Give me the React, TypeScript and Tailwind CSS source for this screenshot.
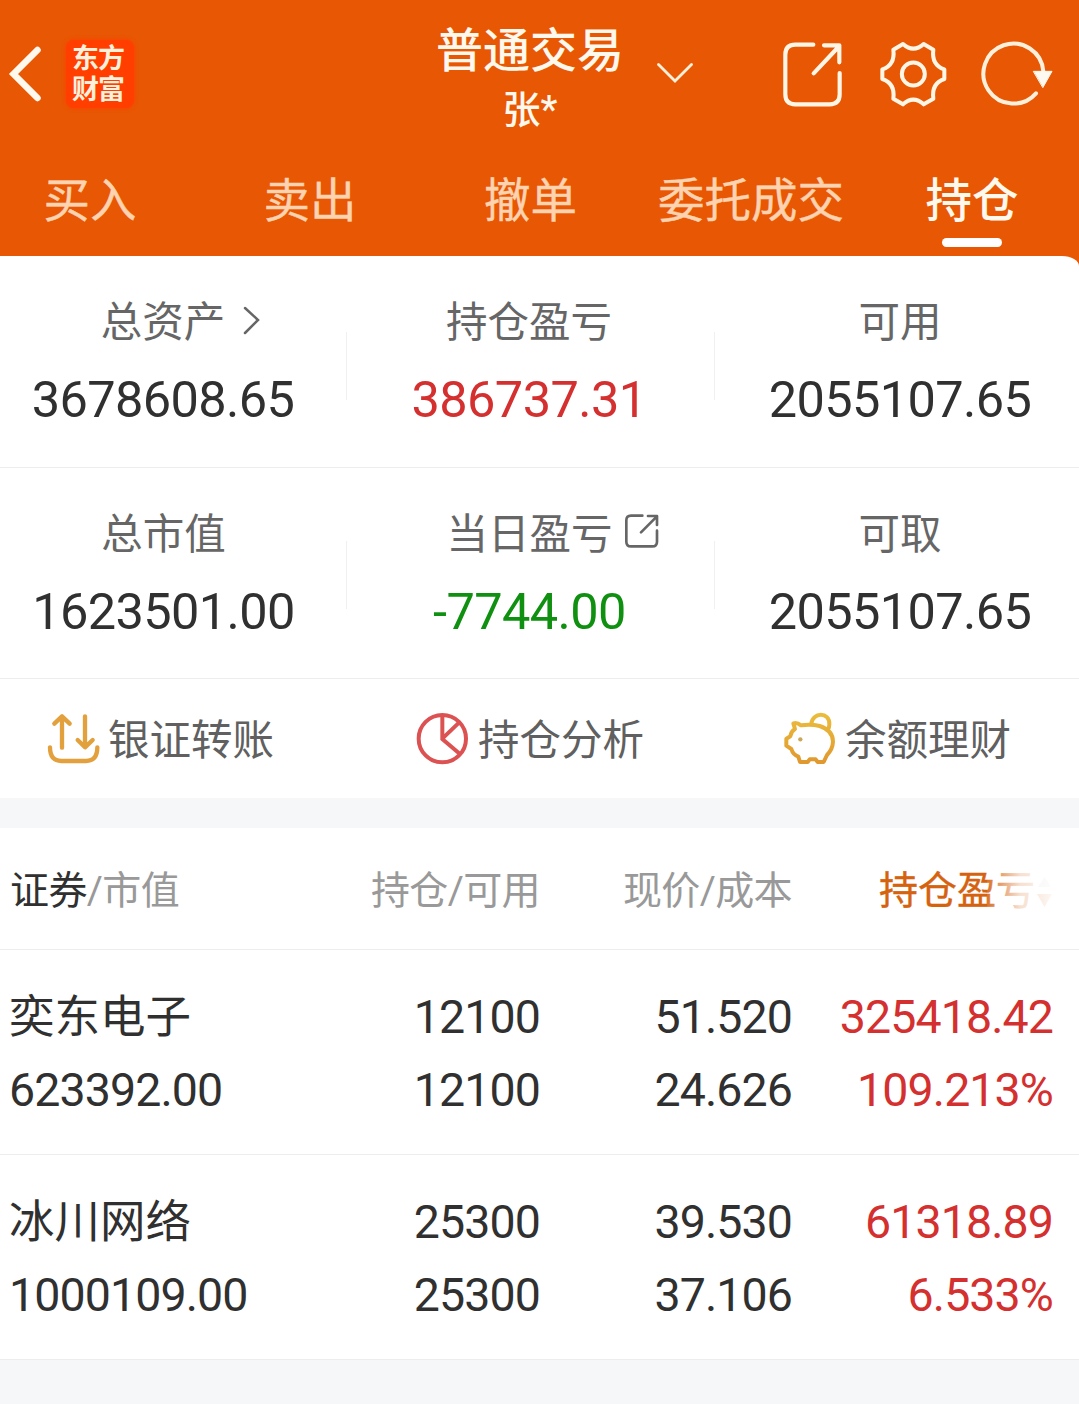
import type { ReactNode } from "react";

const tabs = [
  { label: "买入", pad: "pr-[20px]" },
  { label: "卖出", pad: "" },
  { label: "撤单", pad: "" },
  { label: "委托成交", pad: "" },
  { label: "持仓", pad: "pl-[4px]", active: true },
];

const holdings = [
  { name: "奕东电子", value: "623392.00", held: "12100", free: "12100", price: "51.520", cost: "24.626", profit: "325418.42", rate: "109.213%" },
  { name: "冰川网络", value: "1000109.00", held: "25300", free: "25300", price: "39.530", cost: "37.106", profit: "61318.89", rate: "6.533%" },
];

function ExportIcon() {
  return (
    <svg className="h-[68px] w-[64px]" viewBox="68 120 192 204" fill="none" stroke="#fff6e6" strokeWidth="12.500" strokeLinecap="round" strokeLinejoin="round">
      <path d="M162 134H108Q78 134 78 164V283Q78 313 108 313H211Q241 313 241 283V219" />
      <path d="M163 220L240 138M194 136H240V187" />
    </svg>
  );
}

function GearIcon() {
  return (
    <svg className="size-[68px]" viewBox="361 120 204 204" fill="none" stroke="#fff6e6" strokeWidth="12" strokeLinejoin="round">
      <path d="M430 132Q461 160 492 132L521 149Q515 195 554 208V237Q515 250 521 296L492 313Q461 285 430 313L401 296Q407 250 368 237V208Q407 195 401 149Z" />
      <circle cx="461" cy="222" r="34.500" />
    </svg>
  );
}

function RefreshIcon() {
  return (
    <svg className="h-[68px] w-[74px]" viewBox="664 120 222 204" fill="none" stroke="#fff0dc" strokeWidth="12" strokeLinecap="round">
      <path d="M829 280A90 90 0 1 1 851 214" />
      <path d="M822 214H877L850 262Z" fill="#fffaf0" stroke="#fffaf0" strokeWidth="3" strokeLinejoin="round" />
    </svg>
  );
}

function SmallExportIcon() {
  return (
    <svg className="size-[36px]" viewBox="670 98 108 108" fill="none" stroke="#666" strokeWidth="8" strokeLinecap="round" strokeLinejoin="round">
      <path d="M725 106H691Q677 106 677 120V184Q677 198 691 198H755Q769 198 769 184V151" />
      <path d="M721 156L768 109M742 107H769V134" />
    </svg>
  );
}

function TransferIcon() {
  return (
    <svg className="h-[52px] w-[54px]" viewBox="54 66 162 156" fill="none" stroke="#e3a13d" strokeWidth="13" strokeLinecap="round" strokeLinejoin="round">
      <path d="M99 170V77M76 98L99 76L122 98M168 76V168M146 147L168 169L191 147" />
      <path d="M63 169Q63 210 97 210H171Q205 210 205 169" />
    </svg>
  );
}

function PieIcon() {
  return (
    <svg className="size-[54px]" viewBox="49 65 162 162" fill="none" stroke="#dc5253" strokeWidth="12">
      <circle cx="128" cy="145" r="71" />
      <path d="M128 75V146L180 190M128 145L178 97" />
    </svg>
  );
}

function PiggyIcon() {
  return (
    <svg className="size-[54px]" viewBox="40 66 162 162" fill="none" stroke="url(#gold)" strokeWidth="12" strokeLinecap="round" strokeLinejoin="round">
      <defs>
        <linearGradient id="gold" gradientUnits="userSpaceOnUse" x1="120" y1="70" x2="120" y2="220">
          <stop stopColor="#ebbd3c" />
          <stop offset="1" stopColor="#e0982f" />
        </linearGradient>
      </defs>
      <path d="M71 100Q83 97 94 106Q125 102 150 108Q190 121 190 155Q189 178 172 195L162 216H144L138 208H120L114 216H91L86 200Q70 194 65 177L50 167V146L62 139Q64 124 76 117Z" />
      <path d="M125 102C127 66 181 64 179 103Q179 112 175 118" />
      <circle cx="92" cy="148" r="6.500" fill="#c9a85a" stroke="none" />
    </svg>
  );
}

function Stat({ label, value, tone = "text-[#303030]", pad = "", extra, divider }: { label: string; value: string; tone?: string; pad?: string; extra?: ReactNode; divider?: string }) {
  return (
    <div className={`relative flex flex-col items-center pt-[36px] ${pad}`}>
      <div className="relative text-[41.5px] leading-[62px] text-[#666]">
        {label}
        {extra}
      </div>
      <div className={`mt-[12px] text-[50.5px] leading-[68px] tracking-[-0.6px] ${tone}`}>{value}</div>
      {divider && <i className={`absolute right-0 h-[68px] w-px bg-[#f0f0f0] ${divider}`} />}
    </div>
  );
}

function Cell({ top, bottom, tone = "text-[#303030]" }: { top: string; bottom: string; tone?: string }) {
  return (
    <div className={`text-right text-[46.5px] leading-[73px] tracking-[-0.9px] ${tone}`}>
      <div>{top}</div>
      <div>{bottom}</div>
    </div>
  );
}

export default function App() {
  return (
    <div lang="zh-CN" className="h-[1404px] w-[1079px] overflow-hidden whitespace-nowrap bg-[#f6f7f9] font-[Roboto,'Noto_Sans_CJK_SC',sans-serif]">
      <div className="bg-[#e85703]">
        <header className="flex h-[150px] items-start">
          <svg className="mt-[44px] h-[60px] w-[48px]" viewBox="0 44 48 60" fill="none" stroke="#fff8ec" strokeWidth="6.500" strokeLinecap="round" strokeLinejoin="miter">
            <path d="M37.500 50L13.500 74L37.500 98" />
          </svg>
          <div className="ml-[18px] mt-[40px] flex h-[68px] w-[68px] flex-col justify-center rounded-[8px] bg-[#ff3e00] pl-[6px] text-[27px] font-bold leading-[31px] text-[#fff0dc] shadow-[0_0_4px_#ff3e00]">
            <span className="translate-y-px tracking-[-1px]">东方</span>
            <span className="translate-y-px tracking-[-1px]">财富</span>
          </div>
          <div className="ml-[269px] flex w-[254px] flex-col items-center pt-[16px] text-[#fff8ec]">
            <h1 className="text-[47px] font-medium leading-[70px]">普通交易</h1>
            <div className="-mt-[4px] text-[38px] font-medium leading-[56px]">张*</div>
          </div>
          <svg className="mt-[60px] h-[25px] w-[36px]" viewBox="0 0 36 25" fill="none" stroke="#fff0dc" strokeWidth="2.800" strokeLinecap="round">
            <path d="M1.500 4.500L18 21L34.500 4.500" />
          </svg>
          <div className="ml-[89px] mt-[40px] flex">
            <ExportIcon />
            <div className="ml-[34px]"><GearIcon /></div>
            <div className="ml-[33px]"><RefreshIcon /></div>
          </div>
        </header>
        <nav className="grid h-[106px] grid-cols-[200px_220px_221px_220px_218px]">
          {tabs.map((t) => (
            <div key={t.label} className={`flex flex-col items-center pt-[17px] ${t.pad}`}>
              <span className={`text-[46.5px] leading-[68px] ${t.active ? "font-medium text-[#fff8ec]" : "text-[#ffd3b0] [-webkit-text-stroke:0.4px_#ffd3b0]"}`}>{t.label}</span>
              {t.active && <i className="mt-[3px] h-[9px] w-[60px] rounded-full bg-white" />}
            </div>
          ))}
        </nav>
        <section className="rounded-tr-[17px_10px] bg-white">
          <div className="grid h-[212px] grid-cols-[347px_368px_364px] border-b border-[#ededed]">
            <Stat
              label="总资产"
              value="3678608.65"
              pad="pr-[21px]"
              divider="top-[76px]"
              extra={
                <svg className="absolute -right-[37px] top-[13px] h-[30px] w-[20px]" viewBox="0 0 20 30" fill="none" stroke="#666" strokeWidth="2.500" strokeLinecap="round">
                  <path d="M3 3L16 15L3 28" />
                </svg>
              }
            />
            <Stat label="持仓盈亏" value="386737.31" tone="text-[#d4302f]" pad="pr-[4px]" divider="top-[76px]" />
            <Stat label="可用" value="2055107.65" pad="pl-[6px]" />
          </div>
          <div className="grid h-[211px] grid-cols-[347px_368px_364px] border-b border-[#ededed]">
            <Stat label="总市值" value="1623501.00" pad="pr-[20px]" divider="top-[73px]" />
            <Stat
              label="当日盈亏"
              value="-7744.00"
              tone="text-[#109010]"
              pad="pr-[3px]"
              divider="top-[73px]"
              extra={<span className="absolute -right-[47px] top-[9px]"><SmallExportIcon /></span>}
            />
            <Stat label="可取" value="2055107.65" pad="pl-[6px]" />
          </div>
          <div className="grid h-[119px] grid-cols-[347px_368px_364px] text-[41.5px] leading-[62px] text-[#606060]">
            <div className="flex items-center gap-[7px] pl-[47px]"><TransferIcon /><span className="pt-[4px]">银证转账</span></div>
            <div className="flex items-center gap-[8px] pl-[69px]"><PieIcon /><span className="pt-[4px]">持仓分析</span></div>
            <div className="flex items-center gap-[8px] pl-[68px]"><PiggyIcon /><span className="pt-[4px]">余额理财</span></div>
          </div>
        </section>
      </div>
      <section className="mt-[30px] bg-white">
        <div className="grid h-[122px] grid-cols-[300px_240px_252px_261px] items-center border-b border-[#ededed] pt-[4px] text-right text-[39px] leading-[60px] text-[#999]">
          <div className="pl-[10px] text-left tracking-[-0.6px]"><span className="text-[#303030]">证券</span>/市值</div>
          <div className="tracking-[-0.6px]">持仓/可用</div>
          <div className="tracking-[-0.6px]">现价/成本</div>
          <div className="relative flex items-center justify-end text-[#d5620f]">
            <span className="[-webkit-text-stroke:0.4px_#d5620f]">持仓盈亏</span>
            <svg className="ml-[1px] h-[36px] w-[17px]" viewBox="0 0 17 36">
              <path d="M8.500 4L15 14H2Z" fill="#cccccc" />
              <path d="M8.500 34L16 21H1Z" fill="#d5620f" />
            </svg>
            <i className="absolute inset-y-0 right-0 w-[66px] bg-linear-to-r from-white/10 via-white/80 to-white/95" />
          </div>
        </div>
        {holdings.map((h) => (
          <div key={h.name} className="grid h-[205px] grid-cols-[300px_240px_252px_261px] border-b border-[#ededed] pt-[31px]">
            <div className="pl-[9px] text-[46.5px] leading-[73px] tracking-[-0.9px] text-[#303030]">
              <div className="text-[45.500px] tracking-normal">{h.name}</div>
              <div>{h.value}</div>
            </div>
            <Cell top={h.held} bottom={h.free} />
            <Cell top={h.price} bottom={h.cost} />
            <Cell top={h.profit} bottom={h.rate} tone="text-[#d4302f]" />
          </div>
        ))}
      </section>
    </div>
  );
}
